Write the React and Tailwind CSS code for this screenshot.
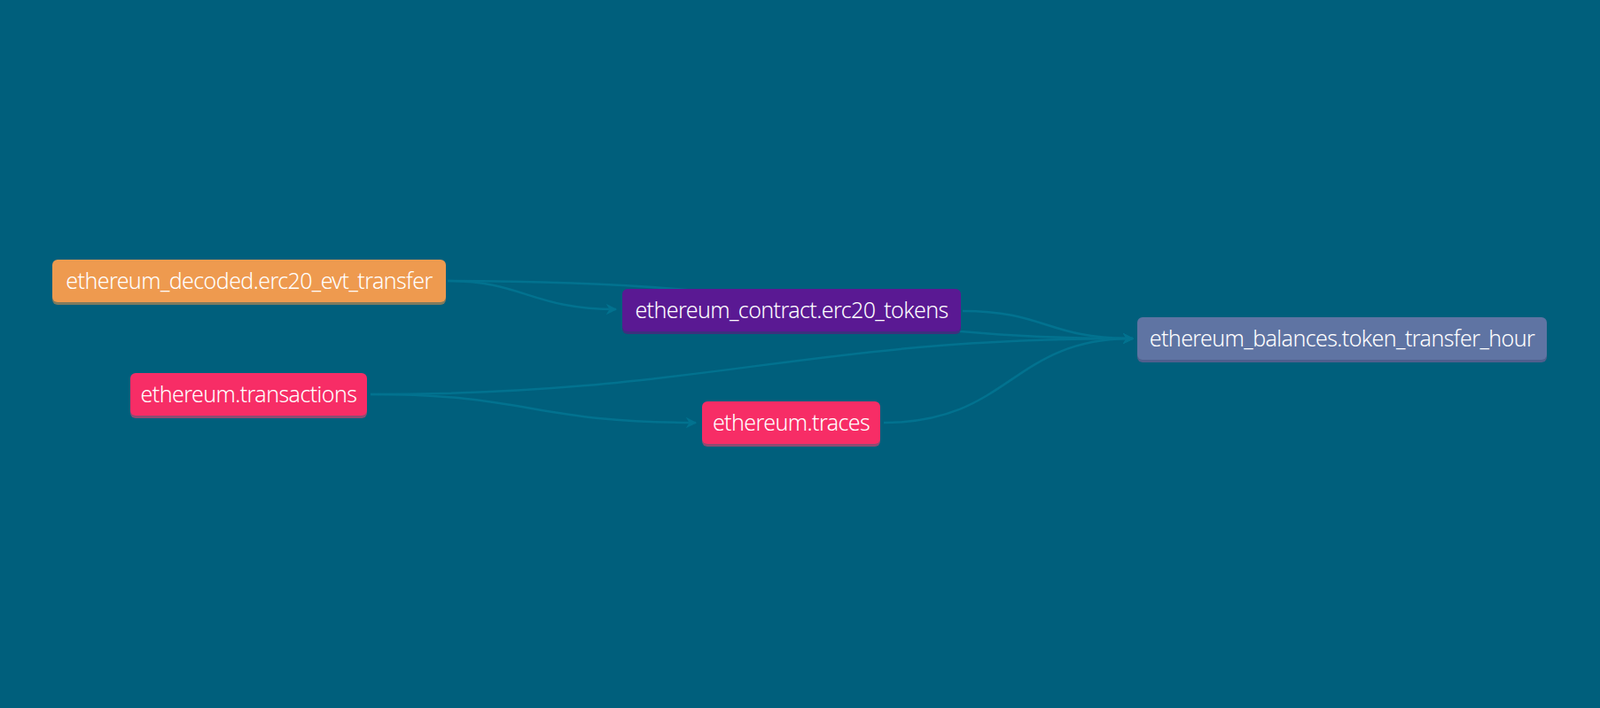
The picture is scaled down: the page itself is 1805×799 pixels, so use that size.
const stroke = "#02728f";

function Node({ className, children }) {
  return (
    <div
      className={`absolute h-[48px] rounded-[6px] flex items-center justify-center text-white text-[25px] font-light tracking-[-0.6px] whitespace-nowrap font-['Open_Sans','DejaVu_Sans',sans-serif] ${className}`}
    >
      {children}
    </div>
  );
}

export default function App() {
  return (
    <div className="relative w-[1805px] h-[799px] bg-[#005f7c] overflow-hidden">
      <svg className="absolute inset-0" width="1805" height="799">
        <defs>
          <marker id="a" viewBox="0 0 10 10" refX="9" refY="5" markerWidth="5" markerHeight="5" orient="auto">
            <path d="M0 0 L10 5 L0 10 L3 5 z" fill={stroke} />
          </marker>
        </defs>
        <g fill="none" stroke={stroke} strokeWidth="2.5">
          <path d="M505 317 C 590 317, 600 349, 695 349" markerEnd="url(#a)" />
          <path d="M505 317 C 800 318, 900 340, 1084 374 C 1150 380, 1200 382, 1278 382" markerEnd="url(#a)" />
          <path d="M1086 351 C 1180 351, 1180 382, 1278 382" markerEnd="url(#a)" />
          <path d="M418 445 C 800 445, 900 382, 1278 382" markerEnd="url(#a)" />
          <path d="M418 445 C 600 445, 600 477, 785 477" markerEnd="url(#a)" />
          <path d="M997 477 C 1140 477, 1140 382, 1278 382" markerEnd="url(#a)" />
        </g>
      </svg>
      <Node className="left-[59px] top-[293px] w-[444px] bg-[#ee9a4f] shadow-[0_3px_0_#7f7b5e]">
        ethereum_decoded.erc20_evt_transfer
      </Node>
      <Node className="left-[702px] top-[326px] w-[382px] bg-[#5a1993] shadow-[0_3px_0_#3e2f7e]">
        ethereum_contract.erc20_tokens
      </Node>
      <Node className="left-[1283px] top-[358px] w-[462px] bg-[#5f74a3] shadow-[0_3px_0_#4f5f8d]">
        ethereum_balances.token_transfer_hour
      </Node>
      <Node className="left-[147px] top-[421px] w-[267px] bg-[#f72d66] shadow-[0_3px_0_#8e4b72]">
        ethereum.transactions
      </Node>
      <Node className="left-[792px] top-[453px] w-[201px] bg-[#f72d66] shadow-[0_3px_0_#8e4b72]">
        ethereum.traces
      </Node>
    </div>
  );
}
